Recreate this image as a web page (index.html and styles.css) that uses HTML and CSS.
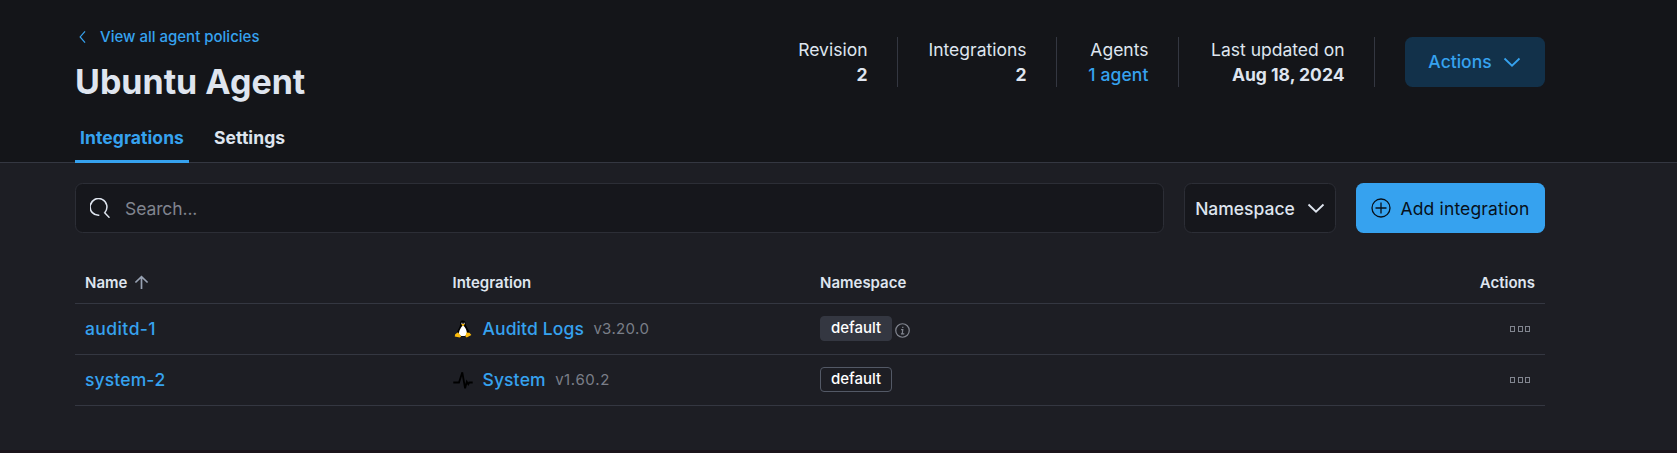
FILE: index.html
```html
<!DOCTYPE html>
<html lang="en">
<head>
<meta charset="utf-8">
<title>Ubuntu Agent</title>
<link rel="stylesheet" href="styles.css">
</head>
<body>
<header class="header">
  <div class="container header-row">
    <div class="heading">
      <a class="back"><svg class="back-icon" viewBox="0 0 16 16"><path d="M10.700 2.500 5.500 8.500l5.200 6"/></svg>View all agent policies</a>
      <h1 class="title">Ubuntu Agent</h1>
    </div>
    <div class="stats">
      <div class="stat"><span>Revision</span><b>2</b></div>
      <div class="stat stat-integrations"><span>Integrations</span><b>2</b></div>
      <div class="stat stat-agents"><span>Agents</span><a class="link">1 agent</a></div>
      <div class="stat stat-updated"><span>Last updated on</span><b>Aug 18, 2024</b></div>
      <button class="btn btn-soft">Actions<svg class="chevron" viewBox="0 0 20 20"><path d="M2.500 6.500 10 13.700l7.500-7.200"/></svg></button>
    </div>
  </div>
  <nav class="container tabs">
    <a class="tab tab-active">Integrations</a>
    <a class="tab">Settings</a>
  </nav>
</header>
<main class="container main">
  <div class="toolbar">
    <div class="search">
      <svg class="search-icon" viewBox="0 0 20 20"><path d="M9.300 17.300A8.400 8.400 0 1 1 14.900 14.400M14.200 14.200l5.300 5.500"/></svg>
      <span class="placeholder">Search...</span>
    </div>
    <button class="btn btn-filter">Namespace<svg class="chevron" viewBox="0 0 20 20"><path d="M2.500 6.500 10 13.700l7.500-7.200"/></svg></button>
    <button class="btn btn-primary"><svg class="plus" viewBox="0 0 20 20"><circle cx="10" cy="10" r="9"/><path d="M10 4.500v11M4.500 10h11"/></svg>Add integration</button>
  </div>
  <div class="table">
    <div class="row row-head">
      <div class="cell">Name<svg class="sort" viewBox="0 0 16 16"><path d="M8 15V2M1.500 8 8 1.700 14.500 8"/></svg></div>
      <div class="cell">Integration</div>
      <div class="cell">Namespace</div>
      <div class="cell cell-end">Actions</div>
    </div>
    <div class="row">
      <div class="cell"><a class="link link-wide">auditd-1</a></div>
      <div class="cell">
        <svg class="logo" viewBox="0 0 20 20"><path fill="#000" d="M9.700 1.500c2 0 3 1.400 3 3.200 0 2.500 3.300 5.300 3.800 10l-2 2.800H5.300L4 14c.4-3 2.900-5.500 3-7.700-.2-2.800.5-4.800 2.700-4.800z"/><path fill="#fff" d="M10 6.200c2 1.500 4 5.300 4 8.300 0 1.700-1.700 2.600-4 2.600s-4-.8-4-2.400c0-3.200 2.200-6.900 4-8.500z"/><path fill="#fdbb0b" d="M8.200 5.300 10 4.700l1.900.7-1.900 1.900zM5 13.200l3.200 4.300-1.300 1.100-5.200-1.200.5-2.200zM13.400 13.400l3 .3 2 2.200-4.700 2.500-1.300-1z"/><path fill="#bbb" d="M8.300 3.700h1.200v1.200H8.300zM10.600 3.700h1.200v1.200h-1.200z"/></svg>
        <a class="link">Auditd Logs</a><span class="version">v3.20.0</span>
      </div>
      <div class="cell"><span class="badge badge-solid">default</span><svg class="info" viewBox="0 0 16 16"><circle cx="8" cy="8" r="7.200"/><path d="M6.500 7H8.300L7.700 11.500M6.300 11.700h3.600M8.300 4.100v1.200"/></svg></div>
      <div class="cell cell-end"><span class="dots"><i></i><i></i><i></i></span></div>
    </div>
    <div class="row">
      <div class="cell"><a class="link">system-2</a></div>
      <div class="cell">
        <svg class="logo pulse" viewBox="0 0 20 20"><path d="M.3 12.500H6L9.300 2.300l2.800 16 1.700-6.500 1.500 2.500 1-1.800H19.700"/></svg>
        <a class="link">System</a><span class="version version-wide">v1.60.2</span>
      </div>
      <div class="cell"><span class="badge">default</span></div>
      <div class="cell cell-end"><span class="dots"><i></i><i></i><i></i></span></div>
    </div>
  </div>
</main>
</body>
</html>
```
FILE: styles.css
```css
* { box-sizing: border-box; }
body { margin: 0; height: 453px; overflow: hidden; background: #1d1e24; border-bottom: 3px solid #1b141b; color: #dfe5ef; font: 17.5px/25px Inter, sans-serif; display: flex; flex-direction: column; }
svg { flex: none; fill: none; stroke: currentColor; stroke-width: 1.3; }
.container { width: 1470px; margin-left: 75px; }
.header { height: 163px; flex: none; background: #141519; border-bottom: 1px solid #343741; display: flex; flex-direction: column; justify-content: space-between; }
.header-row { display: flex; justify-content: space-between; }
.heading { padding-top: 26px; }
.back { display: flex; align-items: center; gap: 10px; height: 20px; font-size: 15px; font-weight: 500; color: #36a2ef; }
.back-icon { width: 15px; height: 15px; }
.title { margin: 15px 0 0; font-size: 34px; line-height: 42px; font-weight: 700; letter-spacing: 0; }
.stats { display: flex; padding-top: 37px; height: 87px; }
.stat { display: flex; flex-direction: column; align-items: flex-end; padding-right: 29.5px; margin-right: 30px; border-right: 1px solid #343741; white-space: nowrap; }
.stat-integrations { width: 129px; }
.stat-agents { width: 92px; }
.stat-updated { width: 166px; }
.link { color: #36a2ef; font-weight: 500; font-kerning: none; letter-spacing: .1px; }
.link-wide { letter-spacing: .4px; }
.btn { display: flex; align-items: center; justify-content: center; height: 50px; border: 0; border-radius: 7.5px; font: 500 17.5px/25px Inter, sans-serif; white-space: nowrap; }
.btn-soft { width: 140px; gap: 10px; padding-bottom: 2px; background: #12314a; color: #36a2ef; }
.chevron { width: 20px; height: 20px; stroke-width: 1.8; }
.tabs { display: flex; gap: 20px; height: 50px; margin-bottom: -1px; }
.tab { padding: 12px 5px 0; font-weight: 700; letter-spacing: .07px; }
.tab-active { color: #36a2ef; box-shadow: inset 0 -3px #36a2ef; }
.main { padding-top: 20px; }
.toolbar { display: flex; gap: 20px; }
.search { flex: 1; display: flex; align-items: center; gap: 15px; height: 50px; padding-left: 14px; background: #16171c; border: 1px solid #2c2e36; border-radius: 7.5px; }
.search-icon { width: 20px; height: 20px; stroke-width: 1.5; }
.placeholder { color: #81858f; letter-spacing: -.1px; }
.btn-filter { width: 152px; gap: 11px; padding: 0 5px 0 6px; background: #16171c; border: 1px solid #2c2e36; color: #dfe5ef; }
.btn-primary { width: 189px; gap: 10px; padding: 0 6px 0 5px; background: #36a2ef; color: #07101a; font-weight: 400; letter-spacing: .15px; }
.plus { width: 20px; height: 20px; }
.table { margin-top: 29px; }
.row { display: grid; grid-template-columns: 367.5px 367.5px 1fr 120px; height: 51px; border-bottom: 1px solid #343741; }
.row-head { height: 42px; font-size: 15px; font-weight: 600; }
.cell { display: flex; align-items: center; padding: 0 10px 1px; }
.cell-end { justify-content: flex-end; }
.sort { width: 15px; height: 15px; margin-left: 7px; stroke: #98a2b3; stroke-width: 1.8; }
.logo { width: 20px; height: 20px; margin-right: 10px; stroke: none; }
.pulse { stroke: #000; stroke-width: 1.8; }
.version { margin-left: 9.5px; font-size: 15px; color: #7a7e88; font-kerning: none; letter-spacing: .2px; }
.version-wide { letter-spacing: .5px; }
.badge { height: 25px; padding: 0 10px; border: 1px solid #535966; border-radius: 4px; font-size: 15px; line-height: 22px; font-weight: 500; color: #fff; }
.badge-solid { background: #343741; border-color: #343741; }
.info { width: 15px; height: 15px; margin: 3px 0 0 3px; color: #81858f; }
.dots { display: flex; gap: 2.5px; margin: 1px 5px 0 0; }
.dots i { width: 5px; height: 6px; border: 1px solid #81858f; }
```
